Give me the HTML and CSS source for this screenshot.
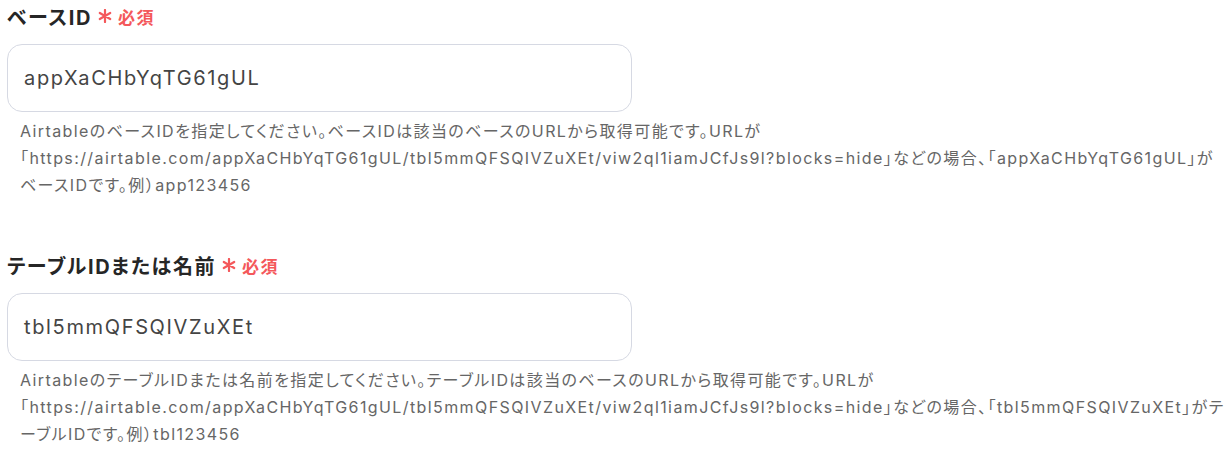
FILE: index.html
```html
<!DOCTYPE html>
<html lang="ja">
<head>
<meta charset="utf-8">
<link rel="stylesheet" href="styles.css">
</head>
<body>
<div class="form">
  <div class="field">
    <div class="label">
      <span class="label-text">ベースID</span>
      <svg class="req-star" viewBox="0 0 14 14" aria-hidden="true"><path d="M7 1v12M1.8 4l10.4 6M1.8 10l10.4-6" stroke="currentColor" stroke-width="2.2" stroke-linecap="round"/></svg>
      <span class="req">必須</span>
    </div>
    <div class="input">appXaCHbYqTG61gUL</div>
    <p class="help">AirtableのベースIDを指定してください。ベースIDは該当のベースのURLから取得可能です。URLが「https://airtable.com/appXaCHbYqTG61gUL/tbl5mmQFSQIVZuXEt/viw2ql1iamJCfJs9l?blocks=hide」などの場合、「appXaCHbYqTG61gUL」がベースIDです。例）app123456</p>
  </div>
  <div class="field">
    <div class="label">
      <span class="label-text">テーブルIDまたは名前</span>
      <svg class="req-star" viewBox="0 0 14 14" aria-hidden="true"><path d="M7 1v12M1.8 4l10.4 6M1.8 10l10.4-6" stroke="currentColor" stroke-width="2.2" stroke-linecap="round"/></svg>
      <span class="req">必須</span>
    </div>
    <div class="input">tbl5mmQFSQIVZuXEt</div>
    <p class="help">AirtableのテーブルIDまたは名前を指定してください。テーブルIDは該当のベースのURLから取得可能です。URLが「https://airtable.com/appXaCHbYqTG61gUL/tbl5mmQFSQIVZuXEt/viw2ql1iamJCfJs9l?blocks=hide」などの場合、「tbl5mmQFSQIVZuXEt」がテーブルIDです。例）tbl123456</p>
  </div>
</div>
</body>
</html>
```
FILE: styles.css
```css
html, body {
  margin: 0;
  padding: 0;
  background: #ffffff;
}
body {
  font-family: Inter, "Noto Sans CJK JP", sans-serif;
  color: #2b2b2b;
  font-feature-settings: "palt";
}
.form {
  padding: 2px 0 0 7px;
  display: flex;
  flex-direction: column;
  gap: 52px;
}
.field {
  display: flex;
  flex-direction: column;
}
.label {
  display: flex;
  align-items: center;
  height: 28px;
  gap: 6px;
}
.label-text {
  font-size: 20px;
  font-weight: 700;
  color: #262626;
  letter-spacing: 1.6px;
}
.req-star {
  width: 14px;
  height: 14px;
  color: #f4585b;
}
.req {
  font-size: 17px;
  font-weight: 700;
  color: #f4585b;
  letter-spacing: 1.5px;
  margin-left: 0;
}
.input {
  margin-top: 14px;
  width: 625px;
  height: 68px;
  box-sizing: border-box;
  border: 1px solid #d6d9e3;
  border-radius: 15px;
  padding: 0 16px;
  display: flex;
  align-items: center;
  font-size: 20px;
  color: #444444;
  letter-spacing: 1.65px;
}
.help {
  margin: 6px 0 0 0;
  padding-left: 13px;
  font-size: 16px;
  line-height: 27px;
  color: #666666;
  letter-spacing: 1.4px;
}
```
